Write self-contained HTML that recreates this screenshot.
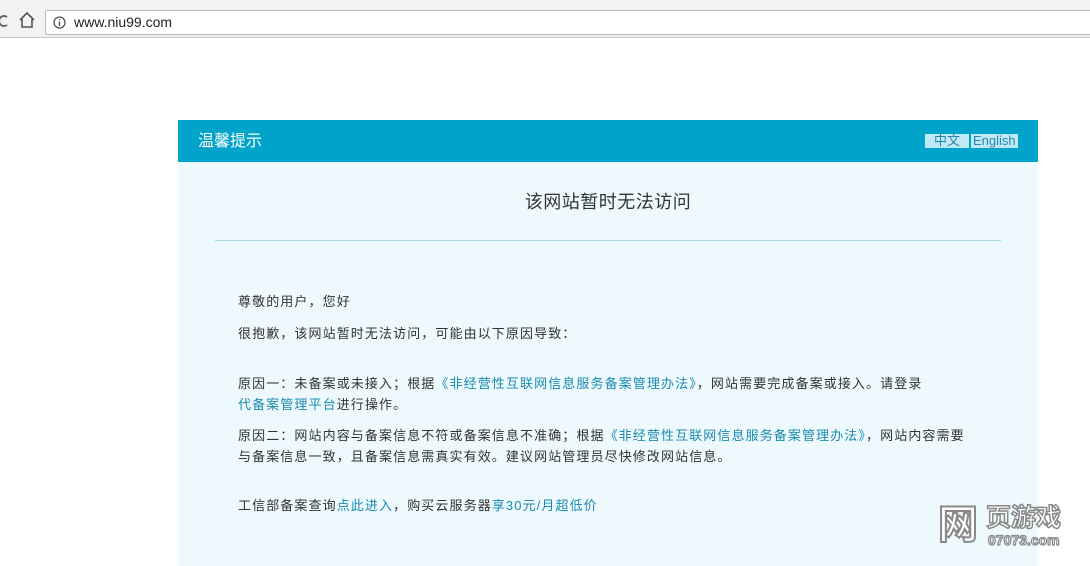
<!DOCTYPE html>
<html><head><meta charset="utf-8"><style>
body{margin:0;width:1090px;height:566px;overflow:hidden;background:#fff;font-family:"Liberation Sans","Noto Sans CJK SC",sans-serif;position:relative}
.tab{position:absolute;left:0;top:0;width:1090px;height:7px;background:#f2f2f2;border-bottom:1px solid #ccc}
.bar{position:absolute;left:0;top:7px;width:1090px;height:30px;background:#f2f2f2;border-bottom:1px solid #c8c8c8}
.addr{position:absolute;left:45px;top:3px;width:1050px;height:23px;background:#fff;border:1px solid #bbb;border-radius:2px}
.url{position:absolute;left:28px;top:3px;font-size:14px;color:#222}
.card{position:absolute;left:178px;top:120px;width:860px;height:446px;background:#eef9fd}
.hd{height:42px;background:#00a3c9;color:#fff;font-size:16px;line-height:44px;padding-left:20px;position:relative}
.lang{position:absolute;left:747px;top:14px;height:14px;font-size:13px;line-height:14px}
.lang span{display:inline-block;background:#bfe9f5;color:#2a86b0;height:14px}
h1{margin:0;position:absolute;top:68px;width:100%;text-align:center;font-weight:normal;font-size:18px;color:#333;letter-spacing:0.5px}
.line{position:absolute;left:37px;top:120px;width:786px;height:1px;background:#a8dbe8}
p{position:absolute;left:60px;margin:0;font-size:13px;color:#333;line-height:21px;width:760px;letter-spacing:1.1px}
a{color:#1a8ab0;text-decoration:none}
</style></head><body>
<div class="tab"></div>
<div class="bar">
<svg style="position:absolute;left:0;top:7px" width="10" height="14"><path d="M7 3A5 5 0 1 0 7 11" stroke="#666" stroke-width="2" fill="none"/></svg>
<svg style="position:absolute;left:18px;top:4px" width="18" height="18"><path d="M2 9L9 2L16 9M4 8V16H14V8" stroke="#555" stroke-width="1.6" fill="none"/></svg>
<div class="addr"><svg style="position:absolute;left:7px;top:5px" width="13" height="13"><circle cx="6.5" cy="6.5" r="5.5" stroke="#555" fill="none" stroke-width="1.3"/><path d="M6.5 5.5V10M6.5 3.3V4.3" stroke="#555" stroke-width="1.4"/></svg><span class="url">www.niu99.com</span></div>
</div>
<div class="card">
<div class="hd">温馨提示<div class="lang"><span style="width:44px;text-align:center">中文</span><span style="margin-left:2px;padding:0 2px">English</span></div></div>
<h1>该网站暂时无法访问</h1>
<div class="line"></div>
<p style="top:171px">尊敬的用户，您好</p>
<p style="top:203px">很抱歉，该网站暂时无法访问，可能由以下原因导致：</p>
<p style="top:253px">原因一：未备案或未接入；根据<a>《非经营性互联网信息服务备案管理办法》</a>，网站需要完成备案或接入。请登录<br><a>代备案管理平台</a>进行操作。</p>
<p style="top:305px">原因二：网站内容与备案信息不符或备案信息不准确；根据<a>《非经营性互联网信息服务备案管理办法》</a>，网站内容需要<br>与备案信息一致，且备案信息需真实有效。建议网站管理员尽快修改网站信息。</p>
<p style="top:375px">工信部备案查询<a>点此进入</a>，购买云服务器<a>享30元/月超低价</a></p>
</div>
<div style="position:absolute;left:938px;top:504px;font-size:40px;line-height:42px;color:#fff;-webkit-text-stroke:2px #888;font-weight:bold">网</div>
<div style="position:absolute;left:986px;top:505px;font-size:25px;line-height:27px;color:#fff;-webkit-text-stroke:1.5px #888;font-weight:bold">页游戏</div>
<div style="position:absolute;left:988px;top:532px;font-size:14px;color:#fff;-webkit-text-stroke:1.2px #888;font-weight:bold">07073.com</div>
</body></html>
